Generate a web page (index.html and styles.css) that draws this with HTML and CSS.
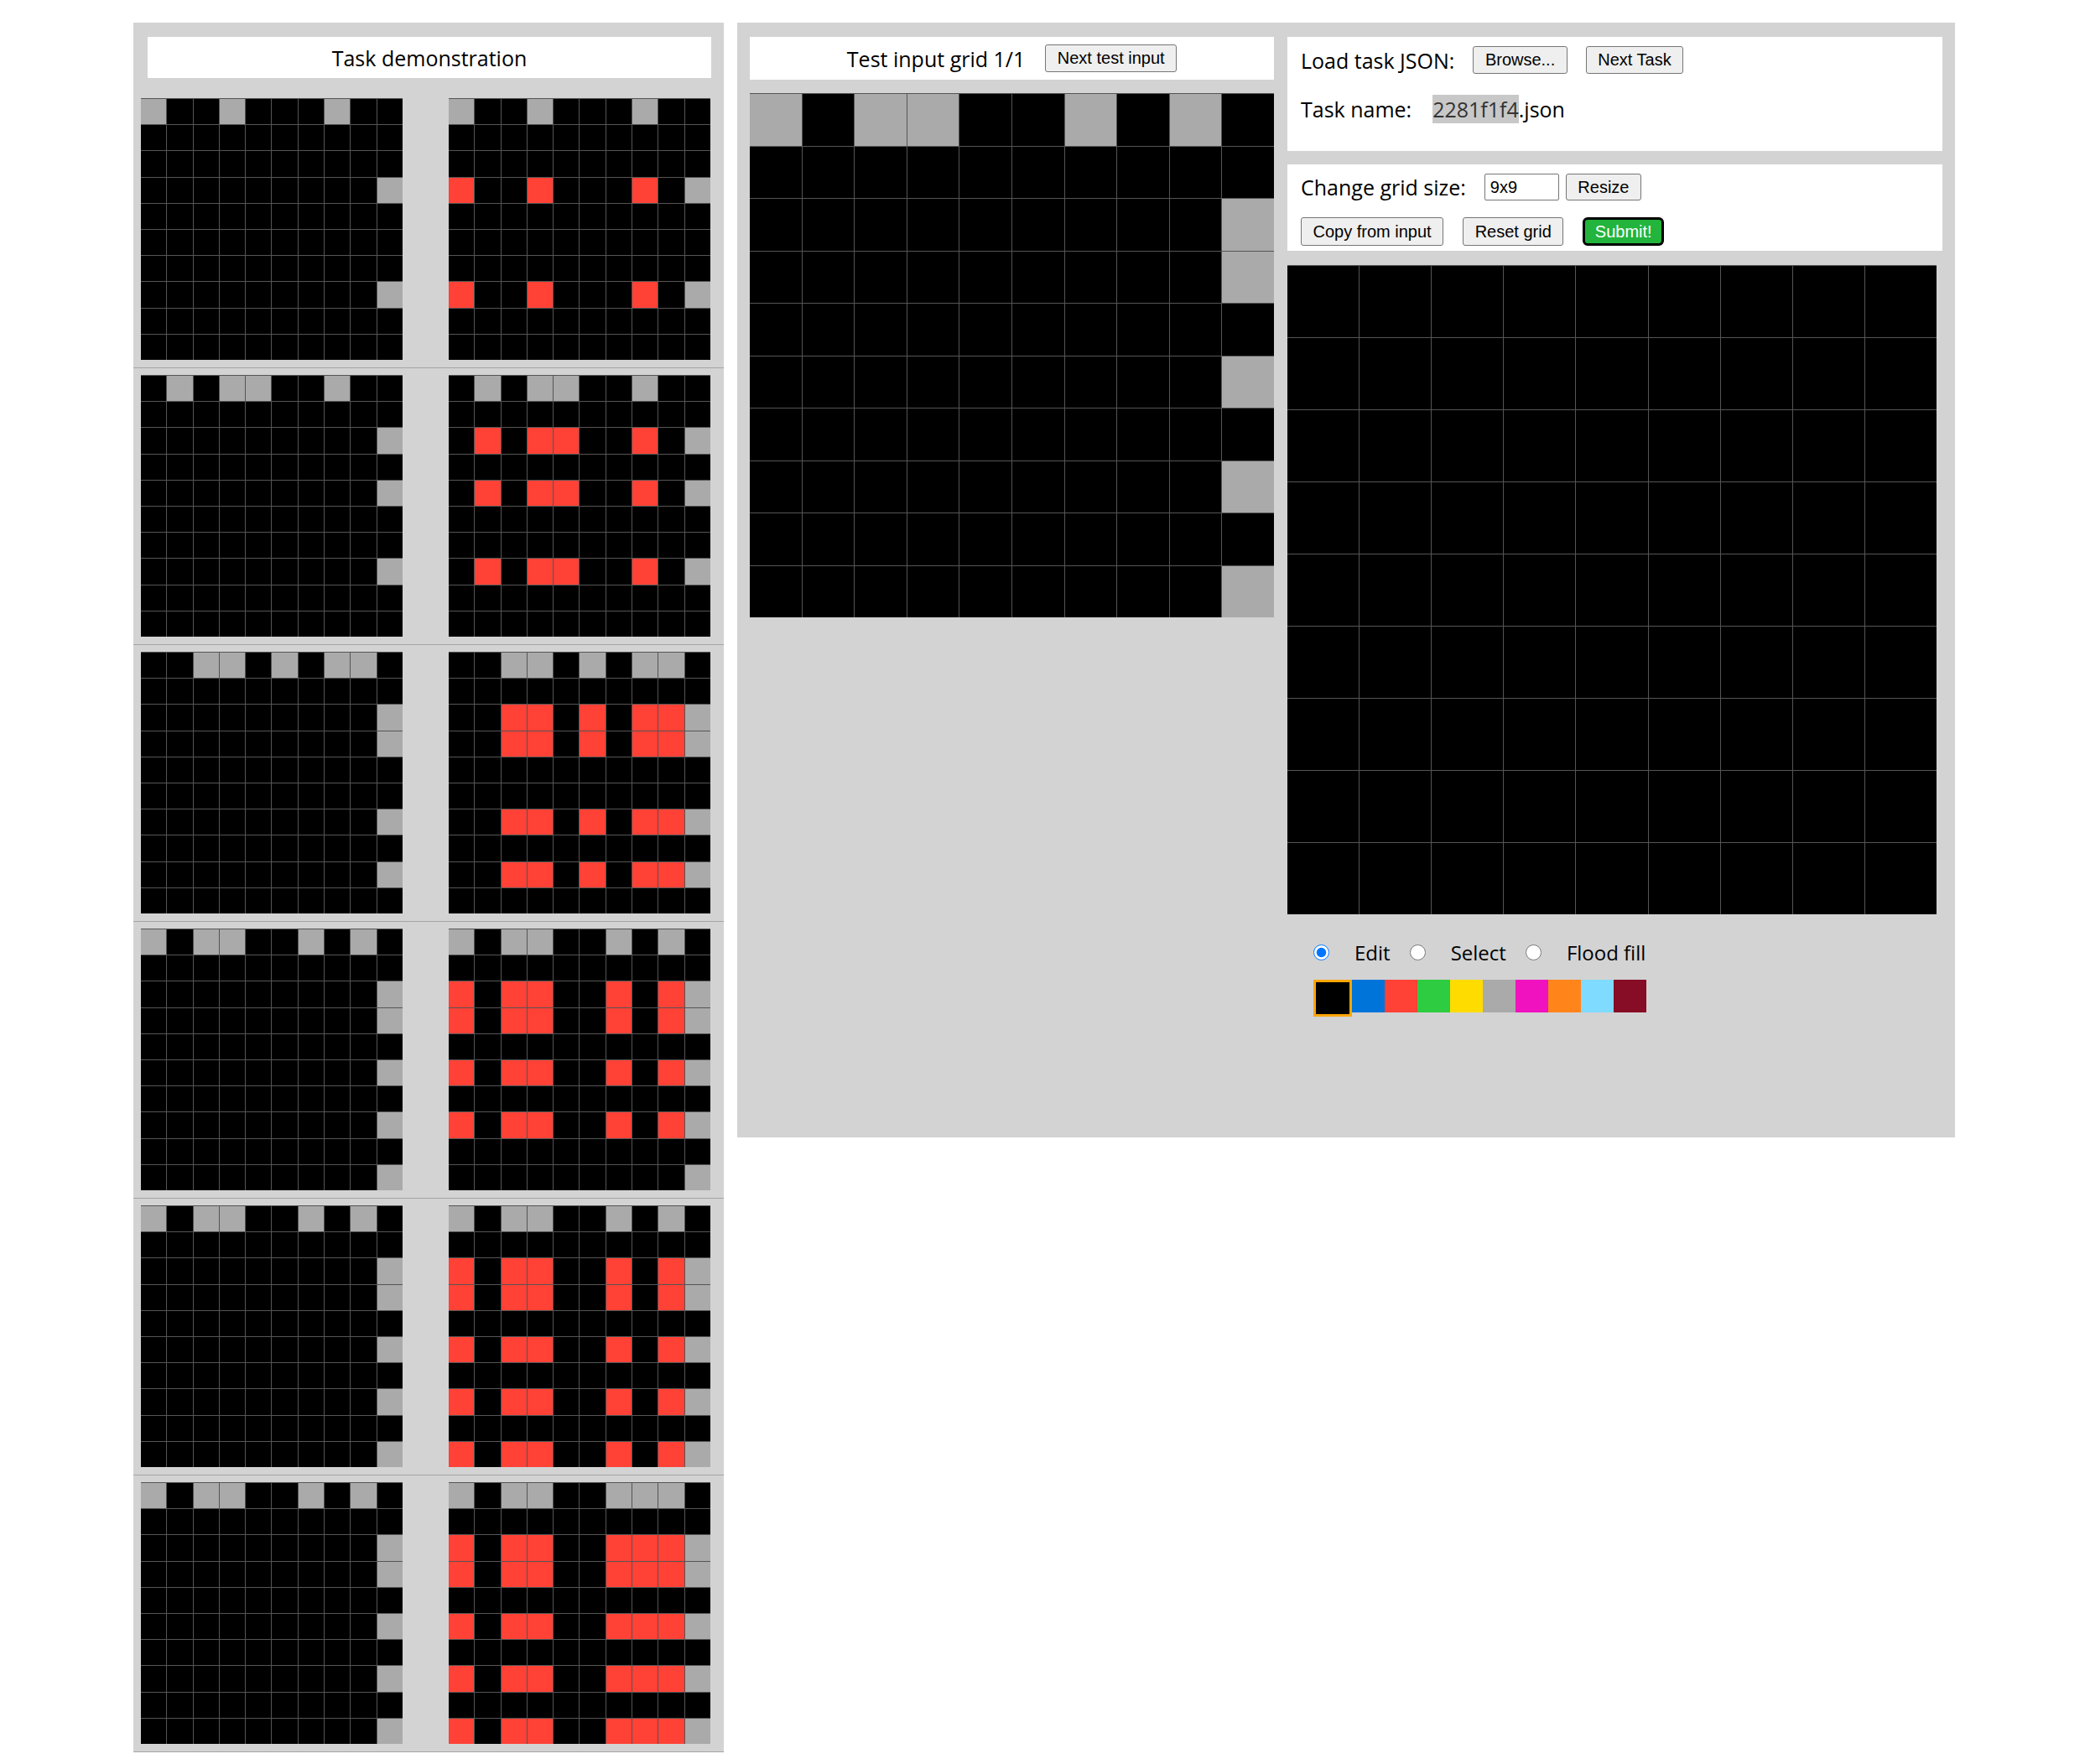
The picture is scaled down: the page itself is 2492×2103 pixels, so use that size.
FILE: index.html
```html
<!DOCTYPE html>
<html>
<head>
<meta charset="utf-8">
<title>ARC testing interface</title>
<link rel="stylesheet" href="styles.css">
</head>
<body>
<div class="workspace">
  <div class="demo-panel">
    <div class="panel-title">Task demonstration</div>

    <div class="pair">
      <div class="grid grid-10 grid-small">
        <i class="g"></i><i></i><i></i><i class="g"></i><i></i><i></i><i></i><i class="g"></i><i></i><i></i>
        <i></i><i></i><i></i><i></i><i></i><i></i><i></i><i></i><i></i><i></i>
        <i></i><i></i><i></i><i></i><i></i><i></i><i></i><i></i><i></i><i></i>
        <i></i><i></i><i></i><i></i><i></i><i></i><i></i><i></i><i></i><i class="g"></i>
        <i></i><i></i><i></i><i></i><i></i><i></i><i></i><i></i><i></i><i></i>
        <i></i><i></i><i></i><i></i><i></i><i></i><i></i><i></i><i></i><i></i>
        <i></i><i></i><i></i><i></i><i></i><i></i><i></i><i></i><i></i><i></i>
        <i></i><i></i><i></i><i></i><i></i><i></i><i></i><i></i><i></i><i class="g"></i>
        <i></i><i></i><i></i><i></i><i></i><i></i><i></i><i></i><i></i><i></i>
        <i></i><i></i><i></i><i></i><i></i><i></i><i></i><i></i><i></i><i></i>
      </div>
      <div class="grid grid-10 grid-small">
        <i class="g"></i><i></i><i></i><i class="g"></i><i></i><i></i><i></i><i class="g"></i><i></i><i></i>
        <i></i><i></i><i></i><i></i><i></i><i></i><i></i><i></i><i></i><i></i>
        <i></i><i></i><i></i><i></i><i></i><i></i><i></i><i></i><i></i><i></i>
        <i class="r"></i><i></i><i></i><i class="r"></i><i></i><i></i><i></i><i class="r"></i><i></i><i class="g"></i>
        <i></i><i></i><i></i><i></i><i></i><i></i><i></i><i></i><i></i><i></i>
        <i></i><i></i><i></i><i></i><i></i><i></i><i></i><i></i><i></i><i></i>
        <i></i><i></i><i></i><i></i><i></i><i></i><i></i><i></i><i></i><i></i>
        <i class="r"></i><i></i><i></i><i class="r"></i><i></i><i></i><i></i><i class="r"></i><i></i><i class="g"></i>
        <i></i><i></i><i></i><i></i><i></i><i></i><i></i><i></i><i></i><i></i>
        <i></i><i></i><i></i><i></i><i></i><i></i><i></i><i></i><i></i><i></i>
      </div>
    </div>

    <div class="pair">
      <div class="grid grid-10 grid-small">
        <i></i><i class="g"></i><i></i><i class="g"></i><i class="g"></i><i></i><i></i><i class="g"></i><i></i><i></i>
        <i></i><i></i><i></i><i></i><i></i><i></i><i></i><i></i><i></i><i></i>
        <i></i><i></i><i></i><i></i><i></i><i></i><i></i><i></i><i></i><i class="g"></i>
        <i></i><i></i><i></i><i></i><i></i><i></i><i></i><i></i><i></i><i></i>
        <i></i><i></i><i></i><i></i><i></i><i></i><i></i><i></i><i></i><i class="g"></i>
        <i></i><i></i><i></i><i></i><i></i><i></i><i></i><i></i><i></i><i></i>
        <i></i><i></i><i></i><i></i><i></i><i></i><i></i><i></i><i></i><i></i>
        <i></i><i></i><i></i><i></i><i></i><i></i><i></i><i></i><i></i><i class="g"></i>
        <i></i><i></i><i></i><i></i><i></i><i></i><i></i><i></i><i></i><i></i>
        <i></i><i></i><i></i><i></i><i></i><i></i><i></i><i></i><i></i><i></i>
      </div>
      <div class="grid grid-10 grid-small">
        <i></i><i class="g"></i><i></i><i class="g"></i><i class="g"></i><i></i><i></i><i class="g"></i><i></i><i></i>
        <i></i><i></i><i></i><i></i><i></i><i></i><i></i><i></i><i></i><i></i>
        <i></i><i class="r"></i><i></i><i class="r"></i><i class="r"></i><i></i><i></i><i class="r"></i><i></i><i class="g"></i>
        <i></i><i></i><i></i><i></i><i></i><i></i><i></i><i></i><i></i><i></i>
        <i></i><i class="r"></i><i></i><i class="r"></i><i class="r"></i><i></i><i></i><i class="r"></i><i></i><i class="g"></i>
        <i></i><i></i><i></i><i></i><i></i><i></i><i></i><i></i><i></i><i></i>
        <i></i><i></i><i></i><i></i><i></i><i></i><i></i><i></i><i></i><i></i>
        <i></i><i class="r"></i><i></i><i class="r"></i><i class="r"></i><i></i><i></i><i class="r"></i><i></i><i class="g"></i>
        <i></i><i></i><i></i><i></i><i></i><i></i><i></i><i></i><i></i><i></i>
        <i></i><i></i><i></i><i></i><i></i><i></i><i></i><i></i><i></i><i></i>
      </div>
    </div>

    <div class="pair">
      <div class="grid grid-10 grid-small">
        <i></i><i></i><i class="g"></i><i class="g"></i><i></i><i class="g"></i><i></i><i class="g"></i><i class="g"></i><i></i>
        <i></i><i></i><i></i><i></i><i></i><i></i><i></i><i></i><i></i><i></i>
        <i></i><i></i><i></i><i></i><i></i><i></i><i></i><i></i><i></i><i class="g"></i>
        <i></i><i></i><i></i><i></i><i></i><i></i><i></i><i></i><i></i><i class="g"></i>
        <i></i><i></i><i></i><i></i><i></i><i></i><i></i><i></i><i></i><i></i>
        <i></i><i></i><i></i><i></i><i></i><i></i><i></i><i></i><i></i><i></i>
        <i></i><i></i><i></i><i></i><i></i><i></i><i></i><i></i><i></i><i class="g"></i>
        <i></i><i></i><i></i><i></i><i></i><i></i><i></i><i></i><i></i><i></i>
        <i></i><i></i><i></i><i></i><i></i><i></i><i></i><i></i><i></i><i class="g"></i>
        <i></i><i></i><i></i><i></i><i></i><i></i><i></i><i></i><i></i><i></i>
      </div>
      <div class="grid grid-10 grid-small">
        <i></i><i></i><i class="g"></i><i class="g"></i><i></i><i class="g"></i><i></i><i class="g"></i><i class="g"></i><i></i>
        <i></i><i></i><i></i><i></i><i></i><i></i><i></i><i></i><i></i><i></i>
        <i></i><i></i><i class="r"></i><i class="r"></i><i></i><i class="r"></i><i></i><i class="r"></i><i class="r"></i><i class="g"></i>
        <i></i><i></i><i class="r"></i><i class="r"></i><i></i><i class="r"></i><i></i><i class="r"></i><i class="r"></i><i class="g"></i>
        <i></i><i></i><i></i><i></i><i></i><i></i><i></i><i></i><i></i><i></i>
        <i></i><i></i><i></i><i></i><i></i><i></i><i></i><i></i><i></i><i></i>
        <i></i><i></i><i class="r"></i><i class="r"></i><i></i><i class="r"></i><i></i><i class="r"></i><i class="r"></i><i class="g"></i>
        <i></i><i></i><i></i><i></i><i></i><i></i><i></i><i></i><i></i><i></i>
        <i></i><i></i><i class="r"></i><i class="r"></i><i></i><i class="r"></i><i></i><i class="r"></i><i class="r"></i><i class="g"></i>
        <i></i><i></i><i></i><i></i><i></i><i></i><i></i><i></i><i></i><i></i>
      </div>
    </div>

    <div class="pair">
      <div class="grid grid-10 grid-small">
        <i class="g"></i><i></i><i class="g"></i><i class="g"></i><i></i><i></i><i class="g"></i><i></i><i class="g"></i><i></i>
        <i></i><i></i><i></i><i></i><i></i><i></i><i></i><i></i><i></i><i></i>
        <i></i><i></i><i></i><i></i><i></i><i></i><i></i><i></i><i></i><i class="g"></i>
        <i></i><i></i><i></i><i></i><i></i><i></i><i></i><i></i><i></i><i class="g"></i>
        <i></i><i></i><i></i><i></i><i></i><i></i><i></i><i></i><i></i><i></i>
        <i></i><i></i><i></i><i></i><i></i><i></i><i></i><i></i><i></i><i class="g"></i>
        <i></i><i></i><i></i><i></i><i></i><i></i><i></i><i></i><i></i><i></i>
        <i></i><i></i><i></i><i></i><i></i><i></i><i></i><i></i><i></i><i class="g"></i>
        <i></i><i></i><i></i><i></i><i></i><i></i><i></i><i></i><i></i><i></i>
        <i></i><i></i><i></i><i></i><i></i><i></i><i></i><i></i><i></i><i class="g"></i>
      </div>
      <div class="grid grid-10 grid-small">
        <i class="g"></i><i></i><i class="g"></i><i class="g"></i><i></i><i></i><i class="g"></i><i></i><i class="g"></i><i></i>
        <i></i><i></i><i></i><i></i><i></i><i></i><i></i><i></i><i></i><i></i>
        <i class="r"></i><i></i><i class="r"></i><i class="r"></i><i></i><i></i><i class="r"></i><i></i><i class="r"></i><i class="g"></i>
        <i class="r"></i><i></i><i class="r"></i><i class="r"></i><i></i><i></i><i class="r"></i><i></i><i class="r"></i><i class="g"></i>
        <i></i><i></i><i></i><i></i><i></i><i></i><i></i><i></i><i></i><i></i>
        <i class="r"></i><i></i><i class="r"></i><i class="r"></i><i></i><i></i><i class="r"></i><i></i><i class="r"></i><i class="g"></i>
        <i></i><i></i><i></i><i></i><i></i><i></i><i></i><i></i><i></i><i></i>
        <i class="r"></i><i></i><i class="r"></i><i class="r"></i><i></i><i></i><i class="r"></i><i></i><i class="r"></i><i class="g"></i>
        <i></i><i></i><i></i><i></i><i></i><i></i><i></i><i></i><i></i><i></i>
        <i></i><i></i><i></i><i></i><i></i><i></i><i></i><i></i><i></i><i class="g"></i>
      </div>
    </div>

    <div class="pair">
      <div class="grid grid-10 grid-small">
        <i class="g"></i><i></i><i class="g"></i><i class="g"></i><i></i><i></i><i class="g"></i><i></i><i class="g"></i><i></i>
        <i></i><i></i><i></i><i></i><i></i><i></i><i></i><i></i><i></i><i></i>
        <i></i><i></i><i></i><i></i><i></i><i></i><i></i><i></i><i></i><i class="g"></i>
        <i></i><i></i><i></i><i></i><i></i><i></i><i></i><i></i><i></i><i class="g"></i>
        <i></i><i></i><i></i><i></i><i></i><i></i><i></i><i></i><i></i><i></i>
        <i></i><i></i><i></i><i></i><i></i><i></i><i></i><i></i><i></i><i class="g"></i>
        <i></i><i></i><i></i><i></i><i></i><i></i><i></i><i></i><i></i><i></i>
        <i></i><i></i><i></i><i></i><i></i><i></i><i></i><i></i><i></i><i class="g"></i>
        <i></i><i></i><i></i><i></i><i></i><i></i><i></i><i></i><i></i><i></i>
        <i></i><i></i><i></i><i></i><i></i><i></i><i></i><i></i><i></i><i class="g"></i>
      </div>
      <div class="grid grid-10 grid-small">
        <i class="g"></i><i></i><i class="g"></i><i class="g"></i><i></i><i></i><i class="g"></i><i></i><i class="g"></i><i></i>
        <i></i><i></i><i></i><i></i><i></i><i></i><i></i><i></i><i></i><i></i>
        <i class="r"></i><i></i><i class="r"></i><i class="r"></i><i></i><i></i><i class="r"></i><i></i><i class="r"></i><i class="g"></i>
        <i class="r"></i><i></i><i class="r"></i><i class="r"></i><i></i><i></i><i class="r"></i><i></i><i class="r"></i><i class="g"></i>
        <i></i><i></i><i></i><i></i><i></i><i></i><i></i><i></i><i></i><i></i>
        <i class="r"></i><i></i><i class="r"></i><i class="r"></i><i></i><i></i><i class="r"></i><i></i><i class="r"></i><i class="g"></i>
        <i></i><i></i><i></i><i></i><i></i><i></i><i></i><i></i><i></i><i></i>
        <i class="r"></i><i></i><i class="r"></i><i class="r"></i><i></i><i></i><i class="r"></i><i></i><i class="r"></i><i class="g"></i>
        <i></i><i></i><i></i><i></i><i></i><i></i><i></i><i></i><i></i><i></i>
        <i class="r"></i><i></i><i class="r"></i><i class="r"></i><i></i><i></i><i class="r"></i><i></i><i class="r"></i><i class="g"></i>
      </div>
    </div>

    <div class="pair">
      <div class="grid grid-10 grid-small">
        <i class="g"></i><i></i><i class="g"></i><i class="g"></i><i></i><i></i><i class="g"></i><i></i><i class="g"></i><i></i>
        <i></i><i></i><i></i><i></i><i></i><i></i><i></i><i></i><i></i><i></i>
        <i></i><i></i><i></i><i></i><i></i><i></i><i></i><i></i><i></i><i class="g"></i>
        <i></i><i></i><i></i><i></i><i></i><i></i><i></i><i></i><i></i><i class="g"></i>
        <i></i><i></i><i></i><i></i><i></i><i></i><i></i><i></i><i></i><i></i>
        <i></i><i></i><i></i><i></i><i></i><i></i><i></i><i></i><i></i><i class="g"></i>
        <i></i><i></i><i></i><i></i><i></i><i></i><i></i><i></i><i></i><i></i>
        <i></i><i></i><i></i><i></i><i></i><i></i><i></i><i></i><i></i><i class="g"></i>
        <i></i><i></i><i></i><i></i><i></i><i></i><i></i><i></i><i></i><i></i>
        <i></i><i></i><i></i><i></i><i></i><i></i><i></i><i></i><i></i><i class="g"></i>
      </div>
      <div class="grid grid-10 grid-small">
        <i class="g"></i><i></i><i class="g"></i><i class="g"></i><i></i><i></i><i class="g"></i><i class="g"></i><i class="g"></i><i></i>
        <i></i><i></i><i></i><i></i><i></i><i></i><i></i><i></i><i></i><i></i>
        <i class="r"></i><i></i><i class="r"></i><i class="r"></i><i></i><i></i><i class="r"></i><i class="r"></i><i class="r"></i><i class="g"></i>
        <i class="r"></i><i></i><i class="r"></i><i class="r"></i><i></i><i></i><i class="r"></i><i class="r"></i><i class="r"></i><i class="g"></i>
        <i></i><i></i><i></i><i></i><i></i><i></i><i></i><i></i><i></i><i></i>
        <i class="r"></i><i></i><i class="r"></i><i class="r"></i><i></i><i></i><i class="r"></i><i class="r"></i><i class="r"></i><i class="g"></i>
        <i></i><i></i><i></i><i></i><i></i><i></i><i></i><i></i><i></i><i></i>
        <i class="r"></i><i></i><i class="r"></i><i class="r"></i><i></i><i></i><i class="r"></i><i class="r"></i><i class="r"></i><i class="g"></i>
        <i></i><i></i><i></i><i></i><i></i><i></i><i></i><i></i><i></i><i></i>
        <i class="r"></i><i></i><i class="r"></i><i class="r"></i><i></i><i></i><i class="r"></i><i class="r"></i><i class="r"></i><i class="g"></i>
      </div>
    </div>
  </div>

  <div class="eval-panel">
    <div class="input-col">
      <div class="test-title">
        <span>Test input grid 1/1</span>
        <button class="btn">Next test input</button>
      </div>
      <div class="grid grid-10 test-grid">
        <i class="g"></i><i></i><i class="g"></i><i class="g"></i><i></i><i></i><i class="g"></i><i></i><i class="g"></i><i></i>
        <i></i><i></i><i></i><i></i><i></i><i></i><i></i><i></i><i></i><i></i>
        <i></i><i></i><i></i><i></i><i></i><i></i><i></i><i></i><i></i><i class="g"></i>
        <i></i><i></i><i></i><i></i><i></i><i></i><i></i><i></i><i></i><i class="g"></i>
        <i></i><i></i><i></i><i></i><i></i><i></i><i></i><i></i><i></i><i></i>
        <i></i><i></i><i></i><i></i><i></i><i></i><i></i><i></i><i></i><i class="g"></i>
        <i></i><i></i><i></i><i></i><i></i><i></i><i></i><i></i><i></i><i></i>
        <i></i><i></i><i></i><i></i><i></i><i></i><i></i><i></i><i></i><i class="g"></i>
        <i></i><i></i><i></i><i></i><i></i><i></i><i></i><i></i><i></i><i></i>
        <i></i><i></i><i></i><i></i><i></i><i></i><i></i><i></i><i></i><i class="g"></i>
      </div>
    </div>

    <div class="output-col">
      <div class="box box-load">
        <div class="row row-load">
          <span class="label">Load task JSON:</span>
          <button class="btn btn-gap">Browse...</button>
          <button class="btn btn-gap">Next Task</button>
        </div>
        <div class="row row-name">
          <span class="label">Task name:</span>
          <span class="task-name"><span class="task-id">2281f1f4</span>.json</span>
        </div>
      </div>

      <div class="box box-size">
        <div class="row row-size">
          <span class="label">Change grid size:</span>
          <input class="size-input" type="text" value="9x9">
          <button class="btn btn-resize">Resize</button>
        </div>
        <div class="row row-actions">
          <button class="btn btn-tall">Copy from input</button>
          <button class="btn btn-tall btn-gap">Reset grid</button>
          <button class="btn btn-tall btn-gap btn-submit">Submit!</button>
        </div>
      </div>

      <div class="grid grid-9 output-grid">
        <i></i><i></i><i></i><i></i><i></i><i></i><i></i><i></i><i></i>
        <i></i><i></i><i></i><i></i><i></i><i></i><i></i><i></i><i></i>
        <i></i><i></i><i></i><i></i><i></i><i></i><i></i><i></i><i></i>
        <i></i><i></i><i></i><i></i><i></i><i></i><i></i><i></i><i></i>
        <i></i><i></i><i></i><i></i><i></i><i></i><i></i><i></i><i></i>
        <i></i><i></i><i></i><i></i><i></i><i></i><i></i><i></i><i></i>
        <i></i><i></i><i></i><i></i><i></i><i></i><i></i><i></i><i></i>
        <i></i><i></i><i></i><i></i><i></i><i></i><i></i><i></i><i></i>
        <i></i><i></i><i></i><i></i><i></i><i></i><i></i><i></i><i></i>
      </div>

      <div class="tools">
        <input class="radio" type="radio" id="tool_edit" name="tool" checked>
        <label class="tool-label" for="tool_edit">Edit</label>
        <input class="radio" type="radio" id="tool_select" name="tool">
        <label class="tool-label" for="tool_select">Select</label>
        <input class="radio" type="radio" id="tool_fill" name="tool">
        <label class="tool-label" for="tool_fill">Flood fill</label>
      </div>

      <div class="palette">
        <div class="swatch s0 selected"></div>
        <div class="swatch s1"></div>
        <div class="swatch s2"></div>
        <div class="swatch s3"></div>
        <div class="swatch s4"></div>
        <div class="swatch s5"></div>
        <div class="swatch s6"></div>
        <div class="swatch s7"></div>
        <div class="swatch s8"></div>
        <div class="swatch s9"></div>
      </div>
    </div>
  </div>
</div>
</body>
</html>
```

FILE: styles.css
```css
html, body {
  margin: 0;
  padding: 0;
  background: #fff;
}

body {
  font-family: "Open Sans", "Liberation Sans", sans-serif;
  font-size: 25px;
  color: #000;
}

.workspace {
  display: flex;
  align-items: flex-start;
  gap: 16px;
  padding: 27px 0 0 159px;
}

/* ---------- demonstration panel ---------- */
.demo-panel {
  width: 704px;
  background: #d3d3d3;
}

.panel-title {
  margin: 17px 15px 16px 17px;
  height: 49px;
  background: #fff;
  display: flex;
  align-items: center;
  justify-content: center;
}

.pair {
  display: flex;
  justify-content: space-between;
  padding: 8px 16px 9px 9px;
  border-bottom: 1px solid #a4a4a4;
}

/* ---------- grids ---------- */
.grid {
  display: grid;
  gap: 1px;
  background: #555;
  border-top: 1px solid #555;
}

.grid-10 {
  grid-template-columns: repeat(10, 1fr);
  grid-template-rows: repeat(10, 1fr);
}

.grid-9 {
  grid-template-columns: repeat(9, 1fr);
  grid-template-rows: repeat(9, 1fr);
}

.grid i {
  display: block;
  background: #000;
}

.grid .g {
  background: #aaaaaa;
}

.grid .r {
  background: #ff4136;
}

.grid-small {
  width: 312px;
  height: 311px;
}

/* ---------- evaluation panel ---------- */
.eval-panel {
  width: 1452px;
  height: 1329px;
  box-sizing: border-box;
  background: #d3d3d3;
  display: flex;
  align-items: flex-start;
  gap: 16px;
  padding: 17px 15px 0 15px;
}

.input-col {
  width: 625px;
}

.test-title {
  height: 51px;
  background: #fff;
  display: flex;
  align-items: center;
  justify-content: center;
  gap: 24px;
}

.test-grid {
  margin-top: 16px;
  width: 625px;
  height: 624px;
}

.output-col {
  width: 781px;
}

.box {
  background: #fff;
  padding-left: 16px;
  box-sizing: border-box;
}

.box-load {
  height: 136px;
  padding-top: 11px;
}

.row {
  display: flex;
  align-items: center;
}

.row-load {
  height: 33px;
}

.row-name {
  margin-top: 25px;
  height: 34px;
}

.box-size {
  margin-top: 16px;
  height: 103px;
  padding-top: 11px;
}

.row-size {
  height: 32px;
}

.row-actions {
  margin-top: 20px;
  height: 34px;
}

.label {
  white-space: nowrap;
}

.task-name {
  margin-left: 25px;
}

.task-id {
  background: #c8c8c8;
  color: #333;
}

/* ---------- controls ---------- */
.btn {
  font-family: "Liberation Sans", Arial, sans-serif;
  font-size: 20px;
  height: 33px;
  padding: 0 13.5px;
  border: 1px solid #767676;
  border-radius: 3px;
  background: #efefef;
  color: #000;
  white-space: nowrap;
}

.row-load .btn-gap {
  margin-left: 22px;
}

.btn-tall {
  height: 34px;
}

.row-actions .btn-gap {
  margin-left: 23px;
}

.btn-resize {
  height: 32px;
  margin-left: 8px;
}

.btn-submit {
  background: #22b43c;
  color: #fff;
  border: 3px solid #000;
  border-radius: 6px;
  padding: 0 11.5px;
}

.size-input {
  margin-left: 22px;
  width: 89px;
  height: 32px;
  box-sizing: border-box;
  padding: 0 6px;
  border: 1px solid #767676;
  border-radius: 2px;
  font-family: "Liberation Sans", Arial, sans-serif;
  font-size: 20px;
  color: #000;
}

.output-grid {
  margin-top: 17px;
  width: 774px;
  height: 773px;
}

.tools {
  display: flex;
  align-items: center;
  height: 30px;
  margin-top: 30px;
  padding-left: 31px;
  font-size: 24px;
}

.radio {
  width: 19px;
  height: 19px;
  margin: 0;
}

.tool-label {
  margin-left: 30px;
  margin-right: 23px;
}

.palette {
  display: flex;
  align-items: flex-start;
  margin-top: 18px;
  padding-left: 31px;
}

.swatch {
  width: 39px;
  height: 39px;
}

.swatch.selected {
  width: 46px;
  height: 44px;
  box-sizing: border-box;
  border: 3px solid #ffa500;
}

.s0 { background: #000000; }
.s1 { background: #0074d9; }
.s2 { background: #ff4136; }
.s3 { background: #2ecc40; }
.s4 { background: #ffdc00; }
.s5 { background: #aaaaaa; }
.s6 { background: #f012be; }
.s7 { background: #ff851b; }
.s8 { background: #7fdbff; }
.s9 { background: #870c25; }
```
